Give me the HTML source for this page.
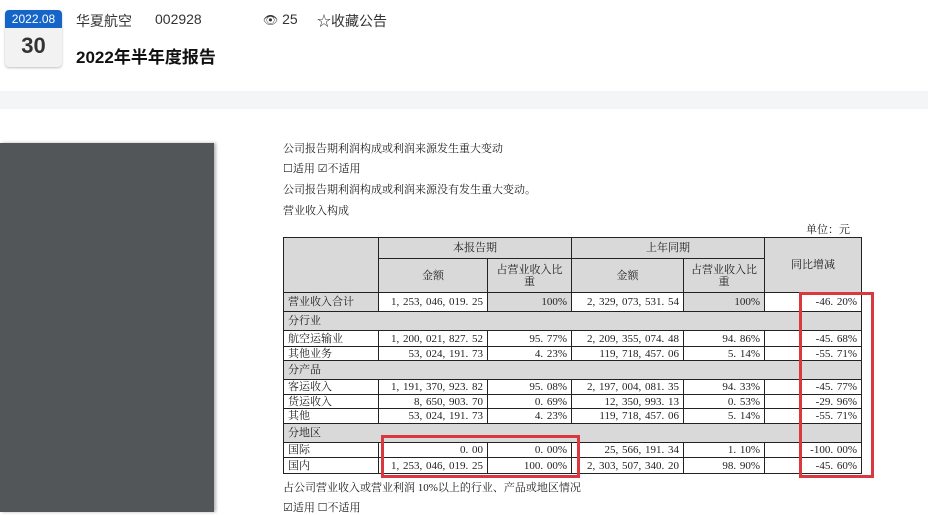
<!DOCTYPE html>
<html><head><meta charset="utf-8"><style>
*{margin:0;padding:0;box-sizing:border-box}
body{width:928px;height:512px;overflow:hidden;background:#fff;font-family:"Liberation Sans","Noto Sans CJK SC",sans-serif;position:relative}
.abs{position:absolute}
.cal{left:5px;top:10px;width:57px;height:57px;border-radius:4px;background:#f2f2f2;box-shadow:0 1px 2px rgba(0,0,0,.25);overflow:hidden}
.cal .m{height:18px;background:#1565c8;color:#fff;font-size:12px;text-align:center;line-height:18px}
.cal .d{text-align:center;font-size:22px;font-weight:bold;color:#333;line-height:36px}
.serif{font-family:"Liberation Serif","Noto Serif CJK SC",serif;font-size:11px;color:#222}
table{border-collapse:collapse;position:absolute;left:283px;top:237px;width:578px;table-layout:fixed}
td{border:1px solid #222;font-family:"Liberation Serif","Noto Serif CJK SC",serif;font-size:11px;color:#222;padding:0 4px;line-height:12px;white-space:nowrap;overflow:hidden}
td.r{text-align:right;word-spacing:1px}
.g{background:#d9d9d9}
.c{text-align:center}
.red{border:3px solid #d9393e}
</style></head><body>
<div class="abs cal"><div class="m">2022.08</div><div class="d">30</div></div>
<div class="abs" style="left:76px;top:11px;font-size:14px;color:#333">华夏航空</div>
<div class="abs" style="left:155px;top:11px;font-size:14px;color:#333">002928</div>
<div class="abs" style="left:263px;top:11px;font-size:14px;color:#333"><span style="font-size:12px">👁</span> 25</div>
<div class="abs" style="left:317px;top:11px;font-size:14px;color:#333">☆收藏公告</div>
<div class="abs" style="left:76px;top:43px;font-size:17px;font-weight:bold;color:#111">2022年半年度报告</div>
<div class="abs" style="left:0;top:91px;width:928px;height:18px;background:#f4f5f7"></div>
<div class="abs" style="left:0;top:143px;width:214px;height:369px;background:#525659;box-shadow:2px 0 3px rgba(0,0,0,.3)"></div>
<div class="abs serif" style="left:283px;top:140px">公司报告期利润构成或利润来源发生重大变动</div>
<div class="abs serif" style="left:283px;top:160px">☐适用 ☑不适用</div>
<div class="abs serif" style="left:283px;top:181px">公司报告期利润构成或利润来源没有发生重大变动。</div>
<div class="abs serif" style="left:283px;top:202px">营业收入构成</div>
<div class="abs serif" style="left:806px;top:221px">单位：元</div>
<table>
<colgroup><col style="width:95px"><col style="width:109px"><col style="width:84px"><col style="width:112px"><col style="width:81px"><col style="width:97px"></colgroup>
<tr style="height:21px"><td class="g" rowspan="2"></td><td class="g c" colspan="2">本报告期</td><td class="g c" colspan="2">上年同期</td><td class="g c" rowspan="2">同比增减</td></tr>
<tr style="height:34px"><td class="g c">金额</td><td class="g c">占营业收入比<br>重</td><td class="g c">金额</td><td class="g c">占营业收入比<br>重</td></tr>
<tr style="height:19px"><td class="g">营业收入合计</td><td class="r">1, 253, 046, 019. 25</td><td class="g r">100%</td><td class="r">2, 329, 073, 531. 54</td><td class="g r">100%</td><td class="r">-46. 20%</td></tr>
<tr style="height:19px"><td class="g" colspan="6">分行业</td></tr>
<tr style="height:16px"><td>航空运输业</td><td class="r">1, 200, 021, 827. 52</td><td class="r">95. 77%</td><td class="r">2, 209, 355, 074. 48</td><td class="r">94. 86%</td><td class="r">-45. 68%</td></tr>
<tr style="height:14px"><td>其他业务</td><td class="r">53, 024, 191. 73</td><td class="r">4. 23%</td><td class="r">119, 718, 457. 06</td><td class="r">5. 14%</td><td class="r">-55. 71%</td></tr>
<tr style="height:19px"><td class="g" colspan="6">分产品</td></tr>
<tr style="height:15px"><td>客运收入</td><td class="r">1, 191, 370, 923. 82</td><td class="r">95. 08%</td><td class="r">2, 197, 004, 081. 35</td><td class="r">94. 33%</td><td class="r">-45. 77%</td></tr>
<tr style="height:14px"><td>货运收入</td><td class="r">8, 650, 903. 70</td><td class="r">0. 69%</td><td class="r">12, 350, 993. 13</td><td class="r">0. 53%</td><td class="r">-29. 96%</td></tr>
<tr style="height:15px"><td>其他</td><td class="r">53, 024, 191. 73</td><td class="r">4. 23%</td><td class="r">119, 718, 457. 06</td><td class="r">5. 14%</td><td class="r">-55. 71%</td></tr>
<tr style="height:19px"><td class="g" colspan="6">分地区</td></tr>
<tr style="height:15px"><td>国际</td><td class="r">0. 00</td><td class="r">0. 00%</td><td class="r">25, 566, 191. 34</td><td class="r">1. 10%</td><td class="r">-100. 00%</td></tr>
<tr style="height:16px"><td>国内</td><td class="r">1, 253, 046, 019. 25</td><td class="r">100. 00%</td><td class="r">2, 303, 507, 340. 20</td><td class="r">98. 90%</td><td class="r">-45. 60%</td></tr>
</table>
<div class="abs red" style="left:799px;top:292px;width:75px;height:186px"></div>
<div class="abs red" style="left:381px;top:435px;width:199px;height:43px"></div>
<div class="abs serif" style="left:283px;top:479px">占公司营业收入或营业利润 10%以上的行业、产品或地区情况</div>
<div class="abs serif" style="left:283px;top:499px">☑适用 ☐不适用</div>
</body></html>
